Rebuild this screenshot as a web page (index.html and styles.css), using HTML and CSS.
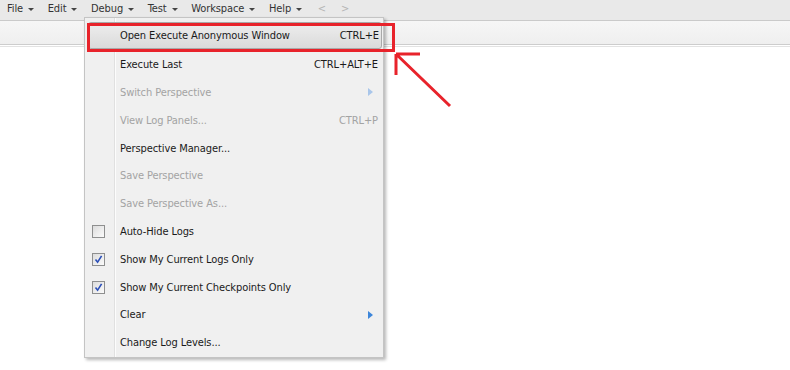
FILE: index.html
```html
<!DOCTYPE html>
<html>
<head>
<meta charset="utf-8">
<link rel="stylesheet" href="styles.css">
</head>
<body>
<div class="app">
  <div class="menubar">
    <span class="mb-item">File<i class="caret"></i></span>
    <span class="mb-item">Edit<i class="caret"></i></span>
    <span class="mb-item active">Debug<i class="caret"></i></span>
    <span class="mb-item">Test<i class="caret"></i></span>
    <span class="mb-item">Workspace<i class="caret"></i></span>
    <span class="mb-item">Help<i class="caret"></i></span>
    <span class="mb-nav">&lt;</span>
    <span class="mb-nav">&gt;</span>
  </div>
  <div class="toolbar"></div>
  <div class="workarea"></div>

  <div class="menu">
    <div class="item hl"><span class="gutter"></span><span class="label">Open Execute Anonymous Window</span><span class="key">CTRL+E</span></div>
    <div class="item"><span class="gutter"></span><span class="label">Execute Last</span><span class="key">CTRL+ALT+E</span></div>
    <div class="item dis"><span class="gutter"></span><span class="label">Switch Perspective</span><span class="sub"></span></div>
    <div class="item dis"><span class="gutter"></span><span class="label">View Log Panels...</span><span class="key">CTRL+P</span></div>
    <div class="item"><span class="gutter"></span><span class="label">Perspective Manager...</span></div>
    <div class="item dis"><span class="gutter"></span><span class="label">Save Perspective</span></div>
    <div class="item dis"><span class="gutter"></span><span class="label">Save Perspective As...</span></div>
    <div class="item"><span class="gutter"><span class="cb"></span></span><span class="label">Auto-Hide Logs</span></div>
    <div class="item"><span class="gutter"><span class="cb"><svg width="11" height="11" viewBox="0 0 11 11"><path d="M2.5 5.5 L4.6 8.2 L8.6 1.8" fill="none" stroke="#2b4fb8" stroke-width="1.6"/></svg></span></span><span class="label">Show My Current Logs Only</span></div>
    <div class="item"><span class="gutter"><span class="cb"><svg width="11" height="11" viewBox="0 0 11 11"><path d="M2.5 5.5 L4.6 8.2 L8.6 1.8" fill="none" stroke="#2b4fb8" stroke-width="1.6"/></svg></span></span><span class="label">Show My Current Checkpoints Only</span></div>
    <div class="item"><span class="gutter"></span><span class="label">Clear</span><span class="sub"></span></div>
    <div class="item"><span class="gutter"></span><span class="label">Change Log Levels...</span></div>
  </div>

  <svg class="annot" width="790" height="370" viewBox="0 0 790 370">
    <rect x="88.5" y="24.5" width="305" height="26" fill="none" stroke="#e8232b" stroke-width="3"/>
    <path d="M396 54 L420 54 M396 54 L396 75 M396 54 L450 106" fill="none" stroke="#e8232b" stroke-width="3"/>
  </svg>
</div>
</body>
</html>
```
FILE: styles.css
```css
* { box-sizing: border-box; }
html, body { margin: 0; padding: 0; }
body {
  width: 790px;
  height: 370px;
  overflow: hidden;
  background: #fff;
  font-family: "DejaVu Sans Condensed", "DejaVu Sans", sans-serif;
  font-stretch: condensed;
  font-size: 11px;
  letter-spacing: -0.1px;
  color: #1a1a1a;
}
.app { position: relative; width: 790px; height: 370px; }

.menubar {
  height: 21px;
  background: #e9e9e9;
  border-bottom: 1px solid #cacaca;
  display: flex;
  align-items: flex-start;
  padding: 2px 0 0 7px;
  color: #333;
}
.mb-item {
  display: inline-flex;
  align-items: center;
  margin-right: 13.6px;
  line-height: 13px;
}
.caret {
  display: inline-block;
  width: 0; height: 0;
  margin-left: 5px;
  margin-top: 1px;
  border-left: 3px solid transparent;
  border-right: 3px solid transparent;
  border-top: 3px solid #444;
}
.mb-nav {
  color: #b5b5b5;
  margin-right: 13px;
  line-height: 13px;
  margin-left: 2px;
}

.toolbar {
  height: 24px;
  background: linear-gradient(#f6f6f6, #efefef);
  border-bottom: 1px solid #cdcdcd;
}
.workarea {
  height: 2px;
  border-bottom: 1px solid #e2e2e2;
}

.menu {
  position: absolute;
  left: 84px;
  top: 17px;
  width: 300px;
  padding: 5px 1px 0 0;
  border: 1px solid #c4c4c4;
  background:
    linear-gradient(to right, transparent 29px, #e0e0e0 29px, #e0e0e0 30px, #fcfcfc 30px, #fcfcfc 31px, transparent 31px),
    #f0f0f0;
  box-shadow: 2px 2px 3px rgba(0,0,0,0.28);
}
.item {
  height: 27.8px;
  display: flex;
  align-items: center;
  padding-right: 4px;
}
.item.hl {
  height: 27px;
  margin: -1px 0 1.8px 3px;
  padding-right: 2px;
  border: 1px solid #a9a9a9;
  border-radius: 3px;
  background: linear-gradient(#eeeeee, #dadada);
}
.gutter {
  width: 29px;
  flex: none;
  display: flex;
  justify-content: center;
  align-items: center;
  padding-left: 1px;
}
.hl .gutter { width: 25px; }
.label { margin-left: 6px; flex: 1; white-space: nowrap; }
.key { white-space: nowrap; }
.dis { color: #a3a3a3; }

.cb {
  width: 13px; height: 13px;
  border: 1px solid #8e8f8f;
  background: linear-gradient(135deg, #dcdcdc, #fbfbfb);
  display: flex;
  align-items: center;
  justify-content: center;
  margin-left: -3px;
}
.cb svg { display: block; }

.sub {
  width: 0; height: 0;
  margin-right: 5px;
  border-top: 4px solid transparent;
  border-bottom: 4px solid transparent;
  border-left: 5px solid #3d86da;
}
.dis .sub { border-left-color: #a9c6ea; }

.annot { position: absolute; left: 0; top: 0; pointer-events: none; }
```
